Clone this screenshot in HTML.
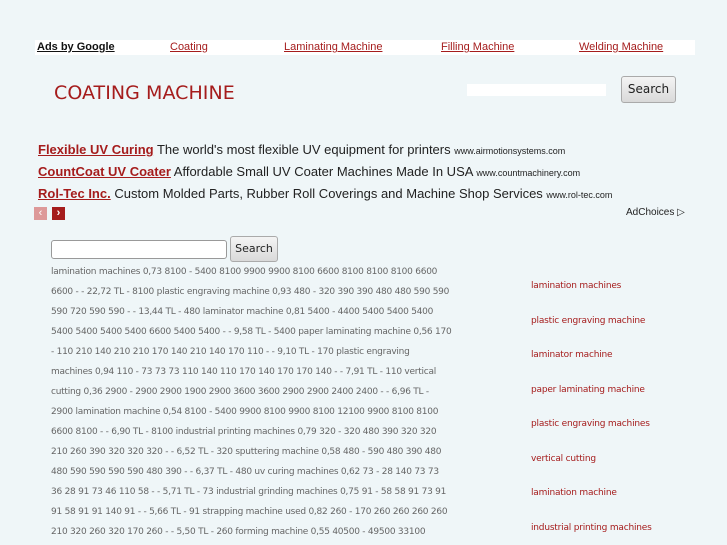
<!DOCTYPE html>
<html><head><meta charset="utf-8"><style>
body{margin:0;width:727px;height:545px;overflow:hidden;background:#eff6f8;font-family:"Liberation Sans",sans-serif;position:relative}
a{color:#a51c1c;text-decoration:underline}
.top{position:absolute;left:35px;top:40px;width:660px;height:15px;background:#fff;font-size:11px}
.top span{position:absolute;top:1px}
h1{position:absolute;left:54px;top:82px;margin:0;font-weight:normal;font-size:19px;color:#a51c1c;font-family:"DejaVu Sans",sans-serif;letter-spacing:0.05px}
.sbox{position:absolute;left:467px;top:84px;width:139px;height:12px;background:#fff}
.btn{position:absolute;background:linear-gradient(#f4f4f4,#d9d9d9);border:1px solid #aaa;border-radius:3px;font-size:12px;color:#222;text-align:center;box-sizing:border-box;font-family:"DejaVu Sans",sans-serif}
.ad{position:absolute;left:38px;font-size:13px;color:#222;white-space:nowrap;font-family:"Liberation Sans",sans-serif}
.ad a{font-weight:bold;font-size:13px}
.ad small{font-size:9px}
.body{position:absolute;left:51px;top:262px;font-size:9px;line-height:20px;color:#666;font-family:"DejaVu Sans",sans-serif;white-space:nowrap;letter-spacing:-0.25px}
.r{position:absolute;left:531px;font-size:9px;color:#a51c1c;font-family:"DejaVu Sans",sans-serif;letter-spacing:-0.2px}
</style></head><body>
<div class="top">
<span style="left:2px;font-weight:bold"><a style="color:#111">Ads by Google</a></span>
<span style="left:135px"><a>Coating</a></span>
<span style="left:249px"><a>Laminating Machine</a></span>
<span style="left:406px"><a>Filling Machine</a></span>
<span style="left:544px"><a>Welding Machine</a></span>
</div>
<h1>COATING MACHINE</h1>
<div class="sbox"></div>
<div class="btn" style="left:621px;top:76px;width:55px;height:27px;line-height:25px">Search</div>
<div class="ad" style="top:142px"><a>Flexible UV Curing</a> The world's most flexible UV equipment for printers <small>www.airmotionsystems.com</small></div>
<div class="ad" style="top:164px"><a>CountCoat UV Coater</a> Affordable Small UV Coater Machines Made In USA <small>www.countmachinery.com</small></div>
<div class="ad" style="top:186px"><a>Rol-Tec Inc.</a> Custom Molded Parts, Rubber Roll Coverings and Machine Shop Services <small>www.rol-tec.com</small></div>
<div style="position:absolute;left:34px;top:207px;width:13px;height:13px;background:#d99;color:#fff;font-size:11px;text-align:center;line-height:13px">‹</div>
<div style="position:absolute;left:52px;top:207px;width:13px;height:13px;background:#a51c1c;color:#fff;font-size:11px;font-weight:bold;text-align:center;line-height:13px">›</div>
<div style="position:absolute;left:626px;top:207px;font-size:10px;color:#222">AdChoices ▷</div>
<div style="position:absolute;left:51px;top:240px;width:176px;height:19px;background:#fff;border:1px solid #999;border-radius:3px;box-sizing:border-box"></div>
<div class="btn" style="left:230px;top:236px;width:48px;height:26px;line-height:24px;font-size:11px">Search</div>
<div class="body">lamination machines 0,73 8100 - 5400 8100 9900 9900 8100 6600 8100 8100 8100 6600<br>6600 - - 22,72 TL - 8100 plastic engraving machine 0,93 480 - 320 390 390 480 480 590 590<br>590 720 590 590 - - 13,44 TL - 480 laminator machine 0,81 5400 - 4400 5400 5400 5400<br>5400 5400 5400 5400 6600 5400 5400 - - 9,58 TL - 5400 paper laminating machine 0,56 170<br>- 110 210 140 210 210 170 140 210 140 170 110 - - 9,10 TL - 170 plastic engraving<br>machines 0,94 110 - 73 73 73 110 140 110 170 140 170 170 140 - - 7,91 TL - 110 vertical<br>cutting 0,36 2900 - 2900 2900 1900 2900 3600 3600 2900 2900 2400 2400 - - 6,96 TL -<br>2900 lamination machine 0,54 8100 - 5400 9900 8100 9900 8100 12100 9900 8100 8100<br>6600 8100 - - 6,90 TL - 8100 industrial printing machines 0,79 320 - 320 480 390 320 320<br>210 260 390 320 320 320 - - 6,52 TL - 320 sputtering machine 0,58 480 - 590 480 390 480<br>480 590 590 590 590 480 390 - - 6,37 TL - 480 uv curing machines 0,62 73 - 28 140 73 73<br>36 28 91 73 46 110 58 - - 5,71 TL - 73 industrial grinding machines 0,75 91 - 58 58 91 73 91<br>91 58 91 91 140 91 - - 5,66 TL - 91 strapping machine used 0,82 260 - 170 260 260 260 260<br>210 320 260 320 170 260 - - 5,50 TL - 260 forming machine 0,55 40500 - 49500 33100</div>
<div class="r" style="top:281px">lamination machines</div>
<div class="r" style="top:316px">plastic engraving machine</div>
<div class="r" style="top:350px">laminator machine</div>
<div class="r" style="top:385px">paper laminating machine</div>
<div class="r" style="top:419px">plastic engraving machines</div>
<div class="r" style="top:454px">vertical cutting</div>
<div class="r" style="top:488px">lamination machine</div>
<div class="r" style="top:523px">industrial printing machines</div>
</body></html>
